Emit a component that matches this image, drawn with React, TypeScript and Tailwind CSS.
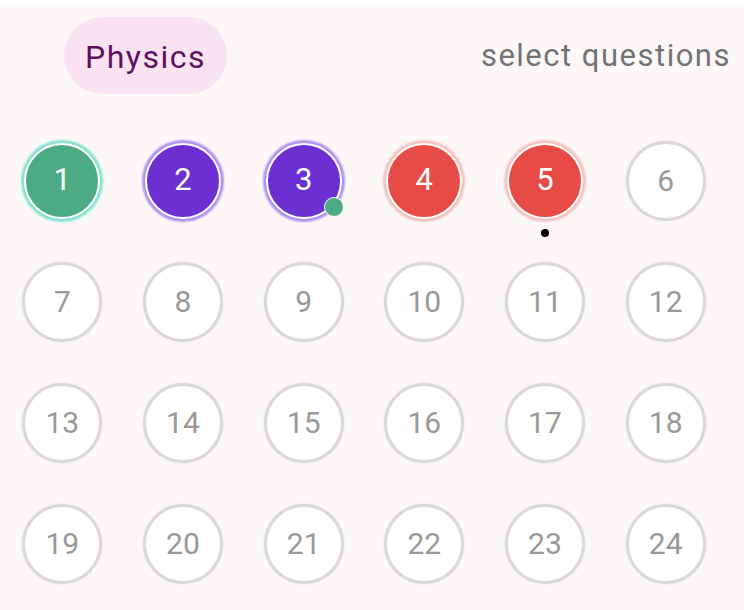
import React from 'react';

type Status = 'answered' | 'review' | 'skipped' | 'none';

const statusFor = (n: number): Status => {
  if (n === 1) return 'answered';
  if (n === 2 || n === 3) return 'review';
  if (n === 4 || n === 5) return 'skipped';
  return 'none';
};

function QuestionBubble({ n }: { n: number }) {
  const status = statusFor(n);

  if (status === 'none') {
    return (
      <div className="w-[80px] h-[80px] rounded-full bg-white border-[3px] border-[#d9d9d9] shadow-[0_0_2px_rgba(0,0,0,0.12)] flex items-center justify-center text-[30px] text-[#999999]">
        {n}
      </div>
    );
  }

  const styles: Record<string, string> = {
    answered: 'bg-[#4caa85] shadow-[0_0_2px_3px_#86e2cf]',
    review: 'bg-[#6c2fd1] shadow-[0_0_2px_3px_#ad90f3]',
    skipped: 'bg-[#e74b46] shadow-[0_0_2px_3px_#f7c1c0]',
  };

  return (
    <div className="relative">
      <div
        className={
          'w-[76px] h-[76px] rounded-full border-2 border-white flex items-center justify-center text-[31px] text-white ' +
          styles[status]
        }
      >
        {n}
      </div>
      {n === 3 && (
        <span className="absolute left-[58px] top-[54px] w-[20px] h-[20px] rounded-full bg-[#4caa85] border border-white" />
      )}
      {n === 5 && (
        <span className="absolute left-[34px] top-[86px] w-[8px] h-[8px] rounded-full bg-black" />
      )}
    </div>
  );
}

export default function App() {
  const questions = Array.from({ length: 24 }, (_, i) => i + 1);

  return (
    <div className="w-[744px] h-[610px] bg-[#fcf8f7] font-['Roboto',sans-serif] overflow-hidden">
      <div className="h-[7px] bg-white" />
      <div className="flex items-center justify-between pl-[64px] pr-[13px] pt-[10px]">
        <div className="h-[77px] px-[21px] pt-[3px] rounded-full bg-[#f9e3f1] flex items-center text-[32px] tracking-[1.5px] text-[#5f0f60]">
          Physics
        </div>
        <div className="text-[31px] tracking-[1.5px] text-[#737373] pt-[2px]">select questions</div>
      </div>
      <div className="grid grid-cols-6 w-[724px] ml-[2px] mt-[26px]">
        {questions.map((n) => (
          <div key={n} className="h-[121px] flex items-center justify-center">
            <QuestionBubble n={n} />
          </div>
        ))}
      </div>
    </div>
  );
}
